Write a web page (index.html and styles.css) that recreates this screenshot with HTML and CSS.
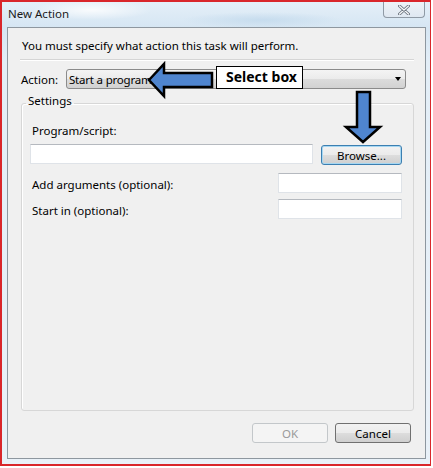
FILE: index.html
```html
<!DOCTYPE html>
<html>
  <head>
    <title>New Action</title>
    <link rel="stylesheet" href="styles.css">
  </head>
  <body>
    <div class="shot">
      <div class="window">
        <div class="titlebar">
          <span class="title">New Action</span>
          <a href="#" class="close">
            <svg width="12" height="10" viewBox="0 0 12 10">
              <path d="M1.5 1 L10.5 9 M10.5 1 L1.5 9" stroke="#6d7680" stroke-width="3" stroke-linecap="round"/>
              <path d="M1.5 1 L10.5 9 M10.5 1 L1.5 9" stroke="#fbfcfd" stroke-width="1.2" stroke-linecap="round"/>
            </svg>
          </a>
        </div>
        <div class="client">
          <p class="intro">You must specify what action this task will perform.</p>
          <div class="action_row">
            <span class="action_label">Action:</span>
            <div class="select">
              <span class="select_text">Start a program</span>
              <span class="caret"></span>
            </div>
          </div>
          <fieldset class="settings">
            <legend>Settings</legend>
            <p class="field_label">Program/script:</p>
            <div class="program_row">
              <div class="textbox wide"></div>
              <a href="#" class="button browse">Browse...</a>
            </div>
            <div class="opt_row">
              <span>Add arguments (optional):</span>
              <div class="textbox"></div>
            </div>
            <div class="opt_row start_in">
              <span>Start in (optional):</span>
              <div class="textbox"></div>
            </div>
          </fieldset>
          <div class="footer">
            <a href="#" class="button disabled">OK</a>
            <a href="#" class="button cancel">Cancel</a>
          </div>
        </div>
      </div>

      <!-- annotations drawn over the dialog -->
      <svg class="arrows" width="433" height="468" viewBox="0 0 433 468">
        <polygon points="149,80 164,64 164,73 212,73 212,87 164,87 164,96" fill="#4f85cf" stroke="#000" stroke-width="2.5" stroke-linejoin="miter"/>
        <polygon points="357,92 370,92 370,127 380,127 363,142 346,127 357,127" fill="#4f85cf" stroke="#000" stroke-width="2.5" stroke-linejoin="miter"/>
      </svg>
      <div class="callout">Select box</div>
    </div>
  </body>
</html>
```

FILE: styles.css
```css
body {
  margin: 0;
  background: #fff;
  font-family: "Noto Sans", "Open Sans", sans-serif;
  font-size: 11.5px;
  color: #000;
}

.shot {
  position: relative;
  width: 431px;
  height: 466px;
  border: 2px solid #d9262b;
  border-right-width: 1px;
  box-sizing: border-box;
}

.window {
  height: 100%;
  box-sizing: border-box;
  padding: 0 4px 5px 5px;
  display: flex;
  flex-direction: column;
  background:
    radial-gradient(ellipse 60px 10px at 90px 8px, rgba(255,255,255,0.8), rgba(255,255,255,0)),
    radial-gradient(ellipse 80px 8px at 260px 18px, rgba(190,215,235,0.7), rgba(255,255,255,0)),
    linear-gradient(to bottom, #e4eff8 0px, #d6e6f3 25px, #e3eef7 60px, #e9f1f8 100%);
}

.titlebar {
  height: 25px;
  display: flex;
  justify-content: space-between;
  align-items: flex-start;
}

.title {
  padding: 4px 0 0 1px;
  line-height: 16px;
  color: #1a1a1a;
}

.close {
  width: 42px;
  height: 16px;
  box-sizing: border-box;
  border: 1px solid #8f9aa5;
  border-top: none;
  border-radius: 0 0 4px 4px;
  background: linear-gradient(to bottom, #eef3f8, #dfe8f1);
  display: flex;
  align-items: center;
  justify-content: center;
  margin-right: 1px;
}

.client {
  flex: 1;
  border: 1px solid #8e979f;
  background: #f0f0f0;
  padding: 0 11px 0 12px;
  display: flex;
  flex-direction: column;
}

.intro {
  margin: 0;
  padding: 10px 0 5px 2px;
  line-height: 16px;
  border-bottom: 1px solid #d5d5d5;
  box-shadow: 0 1px 0 #fff;
}

.action_row {
  display: flex;
  align-items: center;
  margin: 9px 8px 0 1px;
}

.action_label {
  width: 45px;
}

.select {
  flex: 1;
  height: 20px;
  box-sizing: border-box;
  border: 1px solid #8b8b8b;
  border-radius: 3px;
  background: linear-gradient(to bottom, #f4f4f4 0%, #ebebeb 50%, #dcdcdc 51%, #d2d2d2 100%);
  display: flex;
  align-items: center;
  justify-content: space-between;
  padding: 0 4px 0 2px;
}

.select_text {
  letter-spacing: -0.2px;
}

.caret {
  width: 0;
  height: 0;
  border-left: 3.5px solid transparent;
  border-right: 3.5px solid transparent;
  border-top: 4px solid #000;
}

.settings {
  flex: 1;
  margin: 4px 0 0 1px;
  padding: 0 11px 0 8px;
  border: 1px solid #d7d7d7;
  border-radius: 3px;
  box-shadow: inset 1px 1px 0 #fff;
}

.settings legend {
  padding: 0 2px 4px 2px;
  margin-left: -4px;
  line-height: 16px;
}

.field_label {
  margin: 10px 0 0 2px;
  line-height: 16px;
}

.program_row {
  display: flex;
  align-items: center;
  justify-content: space-between;
  margin-top: 4px;
}

.textbox {
  width: 124px;
  height: 20px;
  box-sizing: border-box;
  background: #fff;
  border: 1px solid #dfe3e8;
  border-top-color: #b5b9bf;
}

.textbox.wide {
  width: 283px;
}

.button {
  display: flex;
  align-items: center;
  justify-content: center;
  height: 20px;
  box-sizing: border-box;
  border: 1px solid #707070;
  border-radius: 3px;
  background: linear-gradient(to bottom, #f2f2f2 0%, #ebebeb 50%, #dddddd 51%, #cfcfcf 100%);
  color: #000;
  text-decoration: none;
}

.browse {
  width: 81px;
  margin-top: 2px;
  border-color: #3c7fb1;
  box-shadow: inset 0 0 0 1px #a6d7f2;
}

.opt_row {
  display: flex;
  align-items: center;
  justify-content: space-between;
  margin-top: 8px;
  padding-left: 2px;
}

.opt_row span {
  padding-top: 2px;
}

.start_in {
  margin-top: 6px;
}

.footer {
  display: flex;
  justify-content: flex-end;
  gap: 7px;
  margin: 12px 3px 15px 0;
}

.footer .button {
  width: 76px;
}

.button.disabled {
  border-color: #c3c7ca;
  background: #f4f4f4;
  color: #9a9a9a;
}

.arrows {
  position: absolute;
  left: -2px;
  top: -2px;
}

.callout {
  position: absolute;
  left: 214px;
  top: 64px;
  width: 87px;
  height: 23px;
  box-sizing: border-box;
  border: 1.5px solid #000;
  background: #fff;
  font-weight: bold;
  font-size: 14px;
  line-height: 20px;
  padding-left: 9px;
}
```
